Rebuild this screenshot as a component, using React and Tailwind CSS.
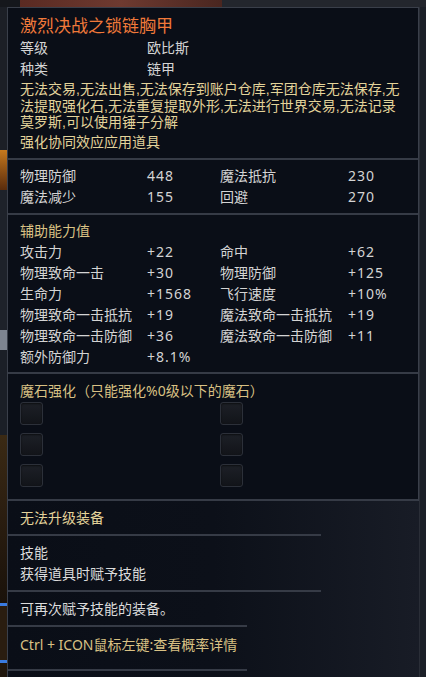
import React from "react";

const font = { fontFamily: '"Noto Sans", "Noto Sans CJK SC", sans-serif' };
const descFont = { fontFamily: '"Liberation Sans", "Noto Sans CJK SC", sans-serif' };

function Divider({ w = "w-full" }) {
  return <div className={`${w} h-[2px] bg-[#363b46]`} />;
}

function Slot() {
  return (
    <div className="w-[23px] h-[23px] rounded-[3px] border border-[#2c3039] bg-gradient-to-b from-[#1d2027] to-[#121419] shadow-[inset_0_1px_2px_rgba(0,0,0,0.6)]" />
  );
}

const base = [
  ["物理防御", "448", "魔法抵抗", "230"],
  ["魔法减少", "155", "回避", "270"],
];

const extra = [
  ["攻击力", "+22", "命中", "+62"],
  ["物理致命一击", "+30", "物理防御", "+125"],
  ["生命力", "+1568", "飞行速度", "+10%"],
  ["物理致命一击抵抗", "+19", "魔法致命一击抵抗", "+19"],
  ["物理致命一击防御", "+36", "魔法致命一击防御", "+11"],
  ["额外防御力", "+8.1%", "", ""],
];

const desc = [
  "无法交易,无法出售,无法保存到账户仓库,军团仓库无法保存,无",
  "法提取强化石,无法重复提取外形,无法进行世界交易,无法记录",
  "莫罗斯,可以使用锤子分解",
];

function StatRow({ row }) {
  return (
    <div className="grid grid-cols-[127px_73px_128px_1fr] h-[21px] items-center text-[14px] text-[#d4d4d4]">
      <span className="whitespace-nowrap">{row[0]}</span>
      <span className="whitespace-nowrap tracking-[1px]">{row[1]}</span>
      <span className="whitespace-nowrap">{row[2]}</span>
      <span className="whitespace-nowrap tracking-[1px]">{row[3]}</span>
    </div>
  );
}

export default function App() {
  return (
    <div className="w-[426px] h-[677px] bg-[#1a1d24] overflow-hidden flex flex-col" style={font}>
      {/* top strip of the game window */}
      <div className="h-[7px] flex shrink-0">
        <div className="w-[20px] bg-[#15171c]" />
        <div className="w-[202px] bg-gradient-to-r from-[#5a2a22] via-[#6e3a30] to-[#4a2620]" />
        <div className="flex-1 bg-[#23262d]" />
      </div>

      <div className="flex flex-1">
        {/* left strip with item icons */}
        <div className="w-[7px] flex flex-col bg-[#161a20]">
          <div className="h-[143px] bg-[#1c1f26]" />
          <div className="h-[40px] bg-gradient-to-b from-[#c77a1e] to-[#5a2c0c]" />
          <div className="h-[140px] bg-[#1e222a]" />
          <div className="h-[20px] bg-[#7d8490]" />
          <div className="h-[85px] bg-[#1b1f27]" />
          <div className="h-[168px] bg-gradient-to-b from-[#3b2a14] via-[#2a1d10] to-[#1a120a]" />
          <div className="h-[3px] bg-[#3a7be0]" />
          <div className="h-[54px] bg-[#2a1d10]" />
          <div className="h-[3px] bg-[#3a7be0]" />
          <div className="flex-1 bg-[#20160c]" />
        </div>

        {/* tooltip */}
        <div className="flex-1 flex flex-col">
          <div className="border-t border-l border-r border-[#3a3f4a] bg-[#0a0e17] w-[412px]">
            <div className="pl-[12px] pr-[8px] pt-[7px] pb-[6px]">
              <div className="h-[22px] flex items-center text-[17px] text-[#f0793a]">激烈决战之锁链胸甲</div>
              <div className="grid grid-cols-[127px_1fr] h-[21px] items-center text-[14px] text-[#d4d4d4]">
                <span>等级</span>
                <span>欧比斯</span>
              </div>
              <div className="grid grid-cols-[127px_1fr] h-[21px] items-center text-[14px] text-[#d4d4d4]">
                <span>种类</span>
                <span>链甲</span>
              </div>
              <div className="pt-[2px]" style={descFont}>
                {desc.map((l, i) => (
                  <div key={i} className="h-[16.5px] leading-[16.5px] text-[14px] text-[#e3d39a] whitespace-nowrap">
                    {l}
                  </div>
                ))}
              </div>
              <div className="h-[21px] flex items-center text-[14px] text-[#e3d39a]">强化协同效应应用道具</div>
            </div>
            <Divider />
            <div className="pl-[12px] pt-[5px] pb-[6px]">
              {base.map((r, i) => (
                <StatRow key={i} row={r} />
              ))}
            </div>
            <Divider />
            <div className="pl-[12px] pt-[5px] pb-[5px]">
              <div className="h-[21px] flex items-center text-[14px] text-[#d9c184]">辅助能力值</div>
              {extra.map((r, i) => (
                <StatRow key={i} row={r} />
              ))}
            </div>
            <Divider />
            <div className="pl-[12px] pt-[6px] pb-[12px]">
              <div className="h-[21px] flex items-center text-[14px] text-[#d9c184] whitespace-nowrap">
                魔石强化（只能强化%0级以下的魔石）
              </div>
              <div className="grid grid-cols-[200px_1fr] gap-y-[8px] mt-[1px]">
                <Slot />
                <Slot />
                <Slot />
                <Slot />
                <Slot />
                <Slot />
              </div>
            </div>
            <Divider />
          </div>

          <div className="flex-1 border-l border-[#3a3f4a] bg-gradient-to-r from-[#0a0e17] via-[#0c1019] to-[#181c26]">
            <div className="pl-[12px] pt-[6px] pb-[6px]">
              <div className="h-[21px] flex items-center text-[14px] text-[#e3d39a]">无法升级装备</div>
            </div>
            <Divider w="w-[313px]" />
            <div className="pl-[12px] pt-[6px] pb-[6px]">
              <div className="h-[21px] flex items-center text-[14px] text-[#dcdcdc]">技能</div>
              <div className="h-[21px] flex items-center text-[14px] text-[#dcdcdc]">获得道具时赋予技能</div>
            </div>
            <Divider w="w-[313px]" />
            <div className="pl-[12px] pt-[6px] pb-[6px]">
              <div className="h-[21px] flex items-center text-[14px] text-[#dcdcdc]">可再次赋予技能的装备。</div>
            </div>
            <Divider w="w-[239px]" />
            <div className="pl-[12px] pt-[7px] pb-[14px]">
              <div className="h-[21px] flex items-center text-[14px] text-[#d9c184] whitespace-nowrap">
                Ctrl + ICON鼠标左键:查看概率详情
              </div>
            </div>
            <Divider w="w-[239px]" />
          </div>
        </div>

        {/* right strip */}
        <div className="w-[7px] bg-[#1c2028] border-l border-[#2a2e37]" />
      </div>
    </div>
  );
}
